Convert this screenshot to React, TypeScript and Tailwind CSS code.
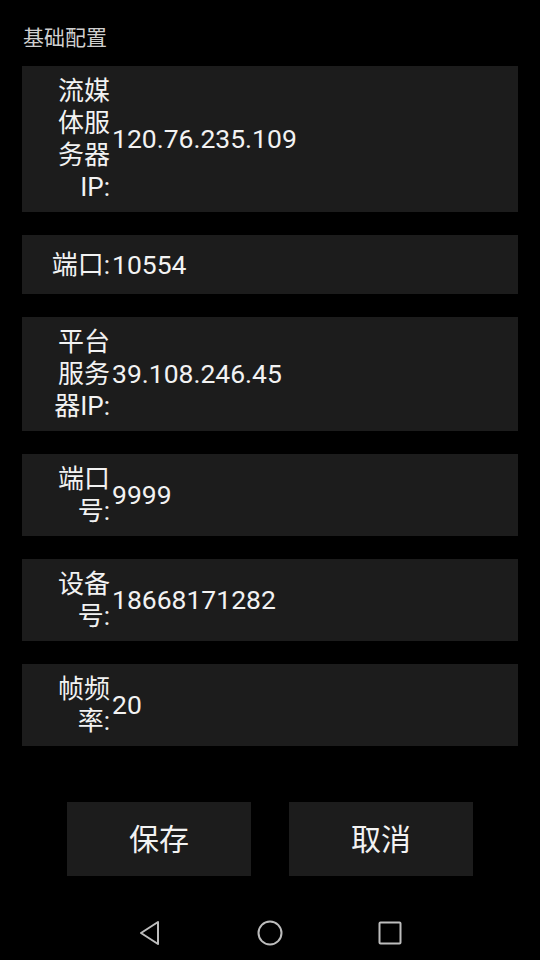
const FONT = { fontFamily: '"Roboto", "Noto Sans CJK SC", sans-serif' };

type Field = { label: string[]; value: string; minH?: boolean };

const fields: Field[] = [
  { label: ["流媒", "体服", "务器", "IP:"], value: "120.76.235.109" },
  { label: ["端口:"], value: "10554", minH: true },
  { label: ["平台", "服务", "器IP:"], value: "39.108.246.45" },
  { label: ["端口", "号:"], value: "9999" },
  { label: ["设备", "号:"], value: "18668171282" },
  { label: ["帧频", "率:"], value: "20" },
];

const FieldRow = ({ field }: { field: Field }) => {
  return (
    <div
      className={`flex items-center bg-[#1c1c1c] pl-[28px] py-[9px] ${field.minH ? "min-h-[59px]" : ""}`}
    >
      <div className="w-[60px] text-right text-[26px] leading-[32px] text-[#f2f2f2]">
        {field.label.map(line => (
          <div key={line}>{line}</div>
        ))}
      </div>
      <div className="pl-[2px] text-[26.5px] leading-[32px] text-[#f2f2f2]">{field.value}</div>
    </div>
  );
};

const NavBar = () => (
  <div className="mt-auto flex h-[54px] items-center justify-center">
    <div className="flex w-[120px] justify-center">
      <svg width="24" height="26" viewBox="0 0 24 26" fill="none" stroke="#bdbdbd" strokeWidth="2" strokeLinejoin="round">
        <path d="M20 2 L3 13 L20 24 Z" />
      </svg>
    </div>
    <div className="flex w-[120px] justify-center">
      <svg width="26" height="26" viewBox="0 0 26 26" fill="none" stroke="#bdbdbd" strokeWidth="2">
        <circle cx="13" cy="13" r="11.5" />
      </svg>
    </div>
    <div className="flex w-[120px] justify-center">
      <svg width="24" height="24" viewBox="0 0 24 24" fill="none" stroke="#bdbdbd" strokeWidth="2">
        <rect x="1.5" y="1.5" width="21" height="21" rx="1" />
      </svg>
    </div>
  </div>
);

export default function App() {
  return (
    <div className="flex h-[960px] w-[540px] flex-col bg-black" style={FONT}>
      <div className="px-[22px] pt-[24px]">
        <div className="pl-[1px] text-[21px] leading-[28px] text-[#cfcfcf]">基础配置</div>
        <div className="mt-[14px] flex flex-col gap-[23px]">
          {fields.map(f => (
            <FieldRow key={f.value} field={f} />
          ))}
        </div>
      </div>

      <div className="mt-[56px] flex justify-center gap-[38px]">
        <button className="flex h-[74px] w-[184px] items-center justify-center bg-[#1c1c1c] text-[30px] text-[#f2f2f2]">
          保存
        </button>
        <button className="flex h-[74px] w-[184px] items-center justify-center bg-[#1c1c1c] text-[30px] text-[#f2f2f2]">
          取消
        </button>
      </div>

      <NavBar />
    </div>
  );
}
